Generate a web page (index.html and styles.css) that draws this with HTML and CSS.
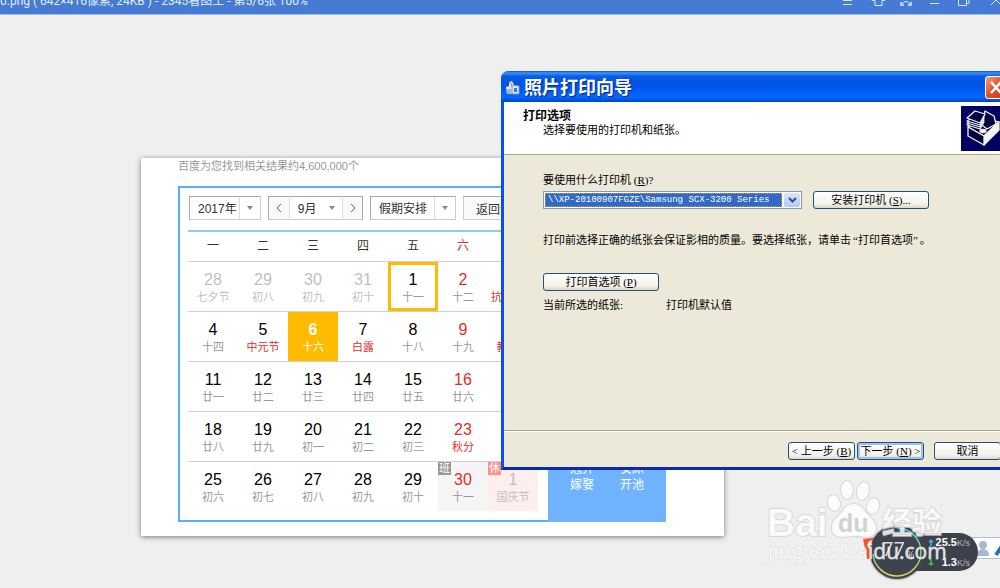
FILE: index.html
```html
<!DOCTYPE html>
<html lang="zh-CN">
<head>
<meta charset="utf-8">
<title>照片打印向导</title>
<link rel="stylesheet" href="styles.css">
</head>
<body>
<div class="desktop">
  <header class="viewer-bar">
    <span class="viewer-title">0.png ( 642×416像素, 24KB ) - 2345看图王 - 第5/6张 100%</span>
    <svg class="viewer-tools" width="164" height="14" viewBox="0 0 164 14" fill="none" stroke="#dce8fa">
      <path d="M7 .5h9M7 4.500h9"/>
      <path d="M36 0v.5h3v5h7v-5h3"/>
      <path d="M66 4q4-5 8 0" /><path d="M65 2v3h3M75 2v3h-3" stroke-width="1.500"/>
      <path d="M94 3.500h9"/>
      <path d="M122.500 0v5.500h8V0M131 3.500h2V0"/>
      <path d="M155 5l5-5l5 5"/>
    </svg>
  </header>

  <main class="sheet">
    <p class="result-count">百度为您找到相关结果约4,600,000个</p>
    <section class="almanac">
      <div class="calendar">
        <div class="filters">
          <label class="picker picker-year"><select aria-label="年份"><option>2017年</option></select><i class="caret"></i></label>
          <div class="month-group">
            <button class="step" type="button" aria-label="上个月"><svg width="8" height="12" viewBox="0 0 8 12"><path d="M6 2L2 6l4 4"/></svg></button>
            <label class="picker picker-month"><select aria-label="月份"><option>9月</option></select><i class="caret"></i></label>
            <button class="step step-next" type="button" aria-label="下个月"><svg width="8" height="12" viewBox="0 0 8 12"><path d="M2 2l4 4l-4 4"/></svg></button>
          </div>
          <label class="picker picker-holiday"><select aria-label="假期"><option>假期安排</option></select><i class="caret"></i></label>
          <button class="today" type="button">返回今天</button>
        </div>
        <table class="days">
          <thead><tr><th>一</th><th>二</th><th>三</th><th>四</th><th>五</th><th class="red">六</th><th class="red">日</th></tr></thead>
          <tbody>
            <tr>
              <td class="faded"><b>28</b><span>七夕节</span></td>
              <td class="faded"><b>29</b><span>初八</span></td>
              <td class="faded"><b>30</b><span>初九</span></td>
              <td class="faded"><b>31</b><span>初十</span></td>
              <td class="picked"><b>1</b><span>十一</span></td>
              <td class="weekend"><b>2</b><span>十二</span></td>
              <td class="weekend festival"><b>3</b><span>抗战胜利</span></td>
            </tr>
            <tr>
              <td><b>4</b><span>十四</span></td>
              <td class="festival"><b>5</b><span>中元节</span></td>
              <td class="current"><b>6</b><span>十六</span></td>
              <td class="festival"><b>7</b><span>白露</span></td>
              <td><b>8</b><span>十八</span></td>
              <td class="weekend"><b>9</b><span>十九</span></td>
              <td class="weekend festival"><b>10</b><span>教师节</span></td>
            </tr>
            <tr>
              <td><b>11</b><span>廿一</span></td>
              <td><b>12</b><span>廿二</span></td>
              <td><b>13</b><span>廿三</span></td>
              <td><b>14</b><span>廿四</span></td>
              <td><b>15</b><span>廿五</span></td>
              <td class="weekend"><b>16</b><span>廿六</span></td>
              <td class="weekend"><b>17</b><span>廿七</span></td>
            </tr>
            <tr>
              <td><b>18</b><span>廿八</span></td>
              <td><b>19</b><span>廿九</span></td>
              <td><b>20</b><span>初一</span></td>
              <td><b>21</b><span>初二</span></td>
              <td><b>22</b><span>初三</span></td>
              <td class="weekend festival"><b>23</b><span>秋分</span></td>
              <td class="weekend"><b>24</b><span>初五</span></td>
            </tr>
            <tr>
              <td><b>25</b><span>初六</span></td>
              <td><b>26</b><span>初七</span></td>
              <td><b>27</b><span>初八</span></td>
              <td><b>28</b><span>初九</span></td>
              <td><b>29</b><span>初十</span></td>
              <td class="weekend workday"><em>班</em><b>30</b><span>十一</span></td>
              <td class="faded rest"><em>休</em><b>1</b><span>国庆节</span></td>
            </tr>
          </tbody>
        </table>
      </div>
      <aside class="advice">
        <span>冠笄</span><span>安床</span>
        <span>嫁娶</span><span>开池</span>
      </aside>
    </section>
  </main>

  <section class="wizard" role="dialog" aria-labelledby="wizard-title">
    <div class="wizard-bar">
      <svg width="16" height="16" viewBox="0 0 16 16"><path d="M1 7l3-1V2l3-1l2 4v9l-7 0z" fill="#e4e6e4"/><path d="M1 9h5v5H2z" fill="#a9b4bd"/><path d="M4 2l2 1l1 4" stroke="#8b98a5" fill="none"/><path d="M7 5l7 1v8H7z" fill="#d7e9f6" stroke="#7899b8"/><rect x="9" y="8" width="3" height="4" fill="#347fc5"/></svg>
      <h1 id="wizard-title">照片打印向导</h1>
      <button class="close" type="button" aria-label="关闭"><svg width="19" height="21" viewBox="0 0 19 21"><path d="M5 5l10 11M15 5L5 16" stroke="#fff" stroke-width="2.500"/></svg></button>
    </div>
    <div class="wizard-head">
      <div>
        <h2>打印选项</h2>
        <p>选择要使用的打印机和纸张。</p>
      </div>
      <svg width="45" height="45" viewBox="0 0 45 45">
        <defs><pattern id="mesh" width="3" height="3" patternUnits="userSpaceOnUse"><rect width="3" height="3" fill="#000048"/><path d="M0 0h3M0 0v3" stroke="#0000a0"/></pattern></defs>
        <rect width="45" height="45" fill="url(#mesh)"/>
        <g fill="#000040" stroke="#f2f2ea" stroke-width="1.300" stroke-linejoin="round">
          <path d="M7 21l15-8l16 3l-15 14z"/>
          <path d="M23 30l15-14v8L23 39z" fill="#f5f5f0"/>
          <path d="M7 21v9l16 9v-9z"/>
          <path d="M24 5l9 5l2 8l-9 5l-5-4z"/>
          <path d="M6 19l5-3h12l-4 7z"/>
          <path d="M6 17l5-3h12l-4 7z"/>
          <path d="M6 15l5-3h12l-4 7z"/>
          <path d="M6 12l8-7l10 3l-5 9z"/>
          <ellipse cx="22" cy="25" rx="3" ry="1.500" fill="#f2f2ea"/>
        </g>
      </svg>
    </div>
    <form class="wizard-body">
      <label for="printer">要使用什么打印机 (<u>R</u>)?</label>
      <div class="printer-row">
        <div class="combo">
          <select id="printer"><option>\\XP-20100907FGZE\Samsung SCX-3200 Series</option></select>
          <span class="combo-arrow"><svg width="9" height="7" viewBox="0 0 9 7"><path d="M1 1l3.500 3.500L8 1" fill="none" stroke="#3c5080" stroke-width="2"/></svg></span>
        </div>
        <button class="xp wide" type="button">安装打印机 (<u>S</u>)...</button>
      </div>
      <p class="hint">打印前选择正确的纸张会保证影相的质量。要选择纸张，请单击<q>打印首选项</q>。</p>
      <button class="xp wide" type="button">打印首选项 (<u>P</u>)</button>
      <p class="paper"><span>当前所选的纸张:</span><span>打印机默认值</span></p>
    </form>
    <footer class="wizard-foot">
      <button class="xp" type="button">&lt; 上一步 (<u>B</u>)</button>
      <button class="xp default" type="button">下一步 (<u>N</u>) &gt;</button>
      <button class="xp cancel" type="button">取消</button>
    </footer>
  </section>

  <div class="ime">
    <svg width="30" height="18" viewBox="0 0 30 18"><circle cx="7" cy="5" r="4" fill="#a9b8cf"/><path d="M1 16q0-7 6-7t6 7z" fill="#a9b8cf"/><path d="M20 15l8-12" stroke="#2e6fc4" stroke-width="4"/></svg>
  </div>
  <svg class="ime-logo" width="30" height="24" viewBox="0 0 30 24"><path d="M0 3L26 0l-1 22L4 23z" fill="#f2582b"/><path d="M14 5q-8 0-8 4t8 3" fill="none" stroke="#fff" stroke-width="3"/></svg>
  <div class="speed">
    <div class="rates">
      <svg width="6" height="8" viewBox="0 0 8 10"><path d="M4 0l4 4H5v5H3V4H0z" fill="#45b9ee"/></svg><span>25.5<small>K/s</small></span>
      <svg width="6" height="8" viewBox="0 0 8 10"><path d="M4 9L0 5h3V0h2v5h3z" fill="#3fc14b"/></svg><span>1.3<small>K/s</small></span>
    </div>
    <svg class="gauge" width="56" height="56" viewBox="0 0 56 56">
      <defs><linearGradient id="ring" x1="0" y1="0" x2="0" y2="1"><stop offset="0" stop-color="#3cd3dc"/><stop offset=".6" stop-color="#86cf86"/><stop offset="1" stop-color="#e4d94c"/></linearGradient></defs>
      <circle cx="28" cy="28" r="27" fill="#3e434e"/>
      <path d="M28 4A24 24 0 1 1 4 30" fill="none" stroke="url(#ring)" stroke-width="1.500"/>
      <text x="13" y="32" class="gauge-value">77</text><text x="38" y="34" class="gauge-unit">%</text>
    </svg>
  </div>
  <svg class="watermark" width="190" height="92" viewBox="0 0 190 92" role="img" aria-label="Baidu 经验">
    <g class="ink">
      <ellipse cx="73" cy="24" rx="6" ry="8" transform="rotate(-15 73 24)"/>
      <ellipse cx="86" cy="11" rx="6" ry="9"/>
      <ellipse cx="102" cy="12" rx="6" ry="9" transform="rotate(12 102 12)"/>
      <ellipse cx="112" cy="27" rx="6" ry="8" transform="rotate(15 112 27)"/>
      <path d="M93 25c9 0 10 8 16 13c9 7 8 20-3 20c-6 0-8-1-13-1s-8 1-13 1c-11 0-12-13-4-20c6-5 8-13 17-13z"/>
      <text x="6" y="57" class="wm-brand">Bai</text>
      <text x="121" y="54" class="wm-cjk">经验</text>
      <text x="7" y="80" class="wm-site">jingyan.baidu.com</text>
    </g>
    <text x="77" y="53" class="wm-du">du</text>
  </svg>
</div>
</body>
</html>
```
FILE: styles.css
```css
* { box-sizing: border-box; }

body {
  margin: 0;
  background: #efefef;
  font-family: "Liberation Sans", "Noto Sans CJK SC", sans-serif;
  font-size: 11px;
}

p, h1, h2 { margin: 0; }
button, select { font: inherit; color: inherit; }
select { appearance: none; border: 0; margin: 0; background: none; outline: 0; }

.desktop { position: relative; height: 100vh; overflow: hidden; }

/* Picture viewer */
.viewer-bar {
  display: flex;
  justify-content: space-between;
  align-items: flex-end;
  height: 15px;
  overflow: hidden;
  background: #457bd4;
  border-bottom: 1px solid #a3bde9;
  color: #e4edfb;
}
.viewer-title { font-family: Roboto, "Noto Sans CJK SC", sans-serif; font-size: 12px; line-height: 16px; padding-bottom: 5px; white-space: nowrap; }

.sheet {
  width: 583px;
  margin: 143px 0 0 141px;
  padding: 0 57px 14px 37px;
  background: #fff;
  box-shadow: 0 1px 5px rgba(0, 0, 0, .5);
}
.result-count { height: 28px; line-height: 16px; color: #999; }

.almanac { display: flex; width: 488px; }
.calendar { flex: 1; border: 2px solid #59acff; border-right: 0; padding: 8px 10px 9px 9px; }

.filters { display: flex; height: 34px; gap: 7px; white-space: nowrap; }
.picker, .step, .today { height: 24px; border: 1px solid #ccc; border-top-color: #aaa; background: #fff; font-size: 12px; color: #333; }
.picker { display: flex; align-items: center; border-left-color: #aaa; }
.picker select { flex: 1; min-width: 0; height: 22px; padding: 2px 0 0 8px; }
.caret { display: flex; align-items: center; justify-content: center; width: 21px; height: 22px; border-left: 1px solid #ddd; }
.caret::before { content: ""; border: 3px solid transparent; border-top: 4px solid #888; border-bottom: 0; }
.picker-year { width: 72px; }
.picker-month { width: 54px; border-left-color: #ddd; border-right: 0; }
.picker-month .caret { border-left: 0; }
.picker-holiday { width: 86px; }
.month-group { display: flex; width: 95px; }
.step { width: 21px; padding: 0; background: #fafafa; border-right: 0; border-left-color: #aaa; }
.step-next { border-right: 1px solid #aaa; border-left-color: #ddd; }
.step svg { display: block; margin: auto; fill: none; stroke: #666; }
.today { width: 74px; padding: 0; background: #fafafa; }

.days { width: 350px; margin-left: -1px; border-collapse: collapse; table-layout: fixed; border-top: 2px solid #8ec8ff; }
.days th { height: 30px; padding: 0 0 4px; font-size: 12px; font-weight: 400; color: #333; }
.days .red { color: #e02d2d; }
.days td { position: relative; height: 50px; padding: 3px 0 0; border-top: 1px solid #d0d0d0; text-align: center; vertical-align: middle; }
.days td b { display: block; font-size: 16px; font-weight: 400; line-height: 18px; color: #000; }
.days td span { display: block; line-height: 16px; color: #999; white-space: nowrap; }
.days .festival span, .days .weekend b { color: #e02d2d; }
.days .faded b, .days .faded span { color: #bfbfbf; }
.days .picked { box-shadow: inset 0 0 0 3px #ffbb00; }
.days .current { background: #ffbb00; }
.days .current b, .days .current span { color: #fff; }
.days .current b { font-weight: 700; }
.days .workday { background: #f5f5f5; }
.days .rest { background: #ffeeee; }
.days em { position: absolute; left: 0; top: 0; width: 13px; line-height: 13px; font-style: normal; background: #969799; color: #fff; }
.days .rest em { background: #ff9088; }

.advice {
  width: 118px;
  padding: 0 16px 29px;
  background: #70b4ff;
  color: #fff;
  font-size: 12px;
  line-height: 16px;
  text-align: center;
  display: grid;
  grid-template-columns: 1fr 1fr;
  align-content: end;
  gap: 0 14px;
}

/* Print wizard */
.wizard {
  position: absolute;
  left: 501px;
  top: 71px;
  width: 510px;
  border: solid #0a51e0;
  border-width: 0 4px 3px 3px;
  border-bottom-color: #0a2bb0;
  border-radius: 8px 8px 0 0;
  background: #ece9d8;
  color: #000;
  font-family: "Liberation Serif", "Noto Sans CJK SC", serif;
}
.wizard-bar {
  display: flex;
  align-items: center;
  gap: 3px;
  height: 31px;
  margin: 0 -4px 0 -3px;
  padding: 2px 5px 0 4px;
  border-radius: 8px 8px 0 0;
  background: linear-gradient(#0a52d8 0, #3c94ff 2px, #0a5fe8 5px, #0054e3 10px, #0058ee 18px, #0268ff 26px, #0046c8 31px);
}
.wizard-bar h1 { flex: 1; font-size: 18px; line-height: 24px; font-weight: 700; color: #fff; text-shadow: 1px 1px 1px #0a2a80; }
.close { width: 21px; height: 23px; padding: 0; border: 1px solid #fff; border-radius: 3px; background: linear-gradient(135deg, #f0a080, #e0502c 50%, #c83c14); }
.close svg { display: block; }
.wizard-head { display: flex; justify-content: space-between; height: 53px; padding: 4px 1px 0 19px; background: #fff; border-bottom: 1px solid #aca899; }
.wizard-head h2 { font-size: 12px; line-height: 14px; padding-top: 3px; }
.wizard-head p { line-height: 14px; padding-left: 20px; }
.wizard-body { height: 275px; padding: 17px 0 0 39px; line-height: 16px; }
.wizard-body label { display: block; }
.printer-row { display: flex; gap: 11px; margin-top: 3px; }
.combo { display: flex; width: 259px; height: 18px; padding: 1px; border: 1px solid #7f9db9; background: #fff; }
.combo select { flex: 1; min-width: 0; height: 14px; padding: 0 2px; border: 1px dotted #d09a40; background: #316ac5; color: #fff; font: 9px "Liberation Mono", monospace; }
.combo-arrow { display: flex; align-items: center; justify-content: center; width: 16px; margin-left: 2px; background: linear-gradient(#dce6fd, #b4c8f6); border-radius: 2px; }
.xp {
  width: 67px;
  height: 18px;
  padding: 0;
  border: 1px solid #1f5080;
  border-radius: 3px;
  background: linear-gradient(#fff, #f3f2ea 75%, #dcd6c8);
  line-height: 14px;
  white-space: nowrap;
}
.xp.wide { width: 116px; }
.xp.default { box-shadow: inset 0 0 0 2px #a4c0f2; }
.hint { margin: 23px 0 25px; }
.hint q { quotes: "“" "”"; padding: 0 2px; }
.wizard-body > .xp { display: block; }
.paper { display: flex; margin-top: 6px; }
.paper span:first-child { width: 123px; }
.wizard-foot { display: flex; gap: 2px; height: 37px; padding: 11px 0 0 284px; border-top: 1px solid #aca899; box-shadow: inset 0 1px #fff; }
.cancel { margin-left: 8px; }

/* Desktop widgets */
.ime { position: absolute; left: 966px; top: 537px; width: 60px; height: 22px; padding: 2px 0 0 9px; background: #fff; border: 1px solid #aebfd8; }
.ime-logo { position: absolute; left: 863px; top: 536px; }
.speed { position: absolute; left: 869px; top: 524px; }
.gauge { position: relative; display: block; filter: drop-shadow(0 0 1px #555); }
.gauge-value { font: 20px "Open Sans", sans-serif; fill: #d9dde2; }
.gauge-unit { font: 9px "Open Sans", sans-serif; fill: #d9dde2; }
.rates {
  position: absolute;
  left: 28px;
  top: 9px;
  width: 81px;
  height: 38px;
  padding: 0 8px 0 31px;
  border-radius: 19px;
  background: #3d414c;
  color: #fff;
  font-size: 11px;
  font-weight: 700;
  line-height: 19px;
  display: grid;
  grid-template-columns: 6px 1fr;
  align-items: center;
  text-align: right;
}
.rates small { font-size: 9px; font-weight: 400; color: #b4b8c0; }

.watermark { position: absolute; left: 761px; top: 479px; }
.ink { fill: #fff; fill-opacity: .8; stroke: #cfcfcf; stroke-opacity: .7; stroke-width: 2px; paint-order: stroke; }
.wm-brand { font: bold 39px "Liberation Sans", sans-serif; }
.wm-cjk { font: bold 30px "Noto Sans CJK SC", sans-serif; }
.wm-site { font: 21px "Open Sans", sans-serif; stroke-width: 1px; }
.wm-du { font: bold 25px "Liberation Sans", sans-serif; fill: #d2d2d2; }
```
